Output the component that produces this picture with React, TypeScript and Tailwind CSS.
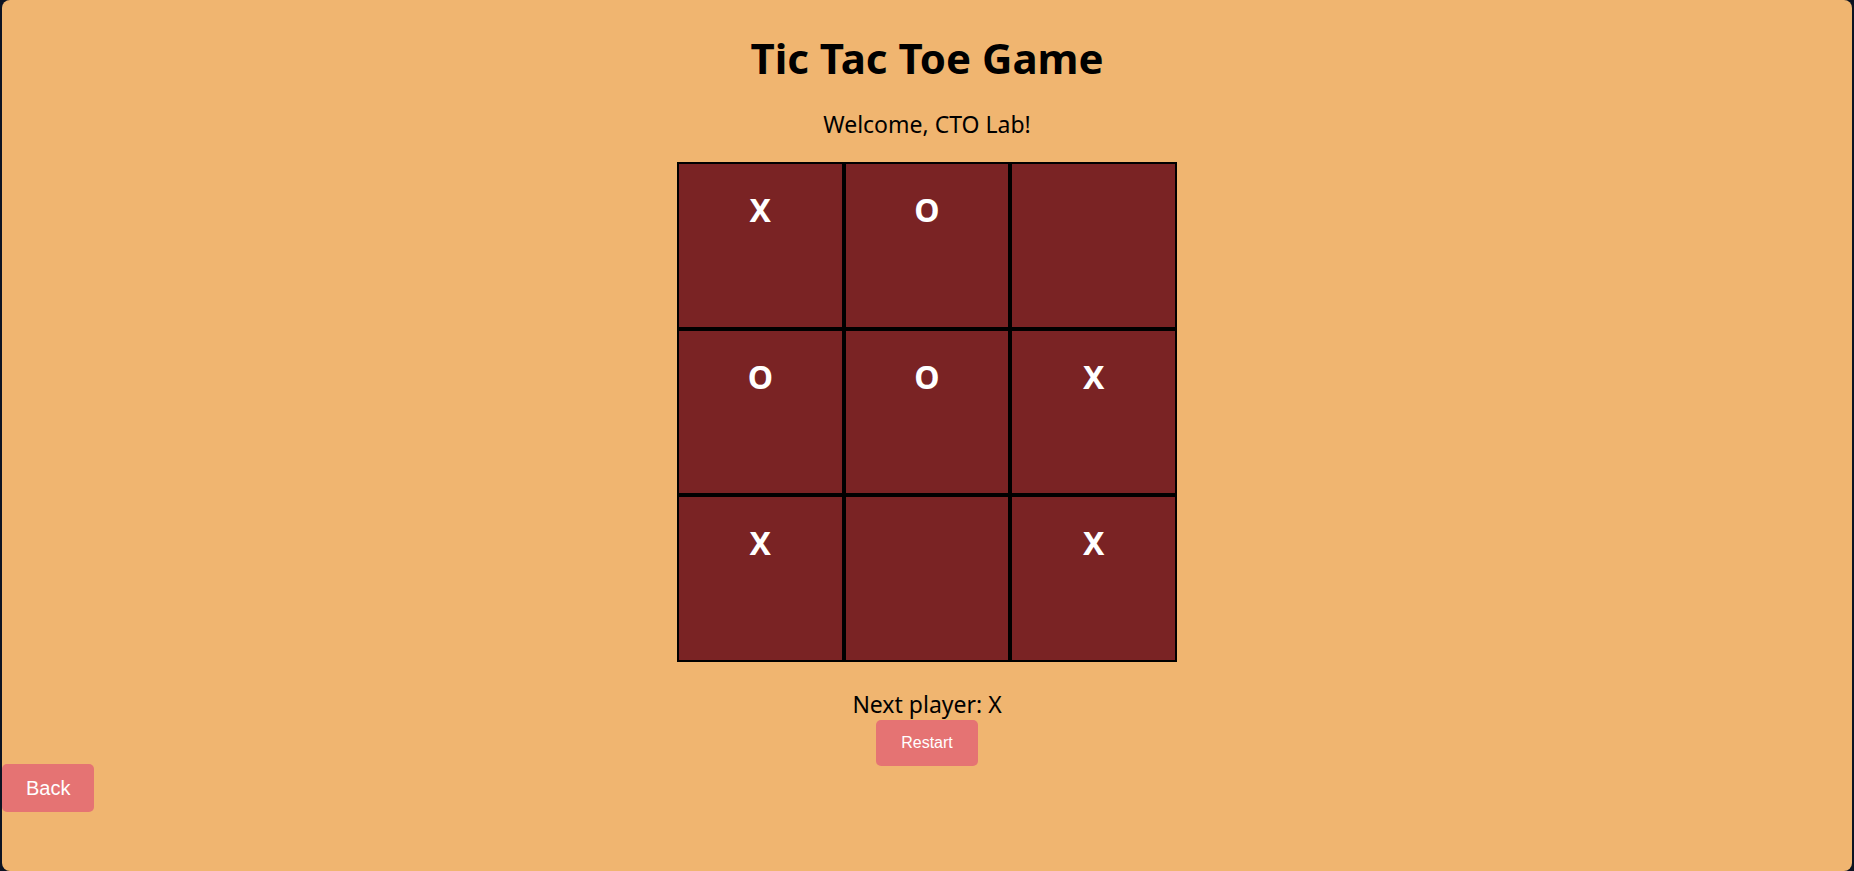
const board = ["X", "O", "", "O", "O", "X", "X", "", "X"];

export default function App() {
  return (
    <div className="h-[871px] bg-[#0c1322] px-[2px] font-['Comic_Sans_MS','Noto_Sans',sans-serif] text-black">
      <div className="relative flex h-full flex-col items-center rounded-lg bg-[#f0b570]">
        <h1 className="mt-[28px] text-[42px] font-bold leading-[60px]">Tic Tac Toe Game</h1>
        <p className="mt-[20px] text-[23px] leading-[32px]">Welcome, CTO Lab!</p>

        {/* board */}
        <div className="mt-[22px] grid h-[500px] w-[500px] grid-cols-3 grid-rows-3">
          {board.map((v, i) => (
            <div
              key={i}
              className="flex justify-center border-2 border-black bg-[#7a2324] pt-[26px] text-[32px] font-bold leading-[40px] text-white"
            >
              {v}
            </div>
          ))}
        </div>

        <p className="mt-[26px] text-[23px] leading-[32px]">Next player: X</p>
        <button className="rounded-[5px] bg-[#e57373] px-[25px] py-[14px] font-['Liberation_Sans',Arial,sans-serif] text-[16px] leading-[18px] text-white">
          Restart
        </button>

        <button className="absolute left-0 top-[764px] rounded-[5px] bg-[#e57373] px-[24px] py-[12px] font-['Liberation_Sans',Arial,sans-serif] text-[20px] leading-[24px] text-white">
          Back
        </button>
      </div>
    </div>
  );
}
